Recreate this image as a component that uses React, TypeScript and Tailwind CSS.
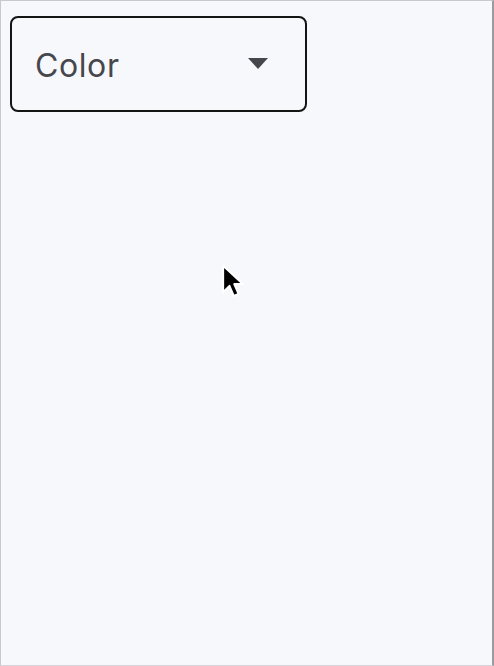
function Cursor() {
  return (
    <svg
      className="absolute left-[220px] top-[262px]"
      width="26"
      height="40"
      viewBox="0 0 24 36"
    >
      <path
        d="M2 2 L2 26.5 L7.8 20.6 L11.8 30 L16.2 28.1 L12.2 19 L20.2 19 Z"
        fill="#000"
        stroke="#fff"
        strokeWidth="1.8"
        strokeLinejoin="round"
      />
    </svg>
  );
}

export default function App() {
  return (
    <div
      className="relative w-[494px] h-[666px] bg-[#f7f8fc] border-t border-l border-b border-r-2 border-t-[#c9c9cc] border-l-[#c9c9cc] border-b-[#d6d6da] border-r-[#9b9b9f] overflow-hidden"
      style={{ fontFamily: 'Inter, "Noto Sans", sans-serif' }}
    >
      <button
        type="button"
        className="ml-[9px] mt-[15px] w-[297px] h-[96px] flex items-center justify-between rounded-lg border-2 border-[#141414] pl-[23px] pr-[37px] text-left"
      >
        <span className="text-[32px] leading-none text-[#46464d] tracking-[0.6px] pt-[3px]">Color</span>
        <svg width="20" height="11" viewBox="0 0 20 11" className="mt-[-2px]">
          <path d="M0 0 H20 L10 11 Z" fill="#46464d" />
        </svg>
      </button>
      <Cursor />
    </div>
  );
}
